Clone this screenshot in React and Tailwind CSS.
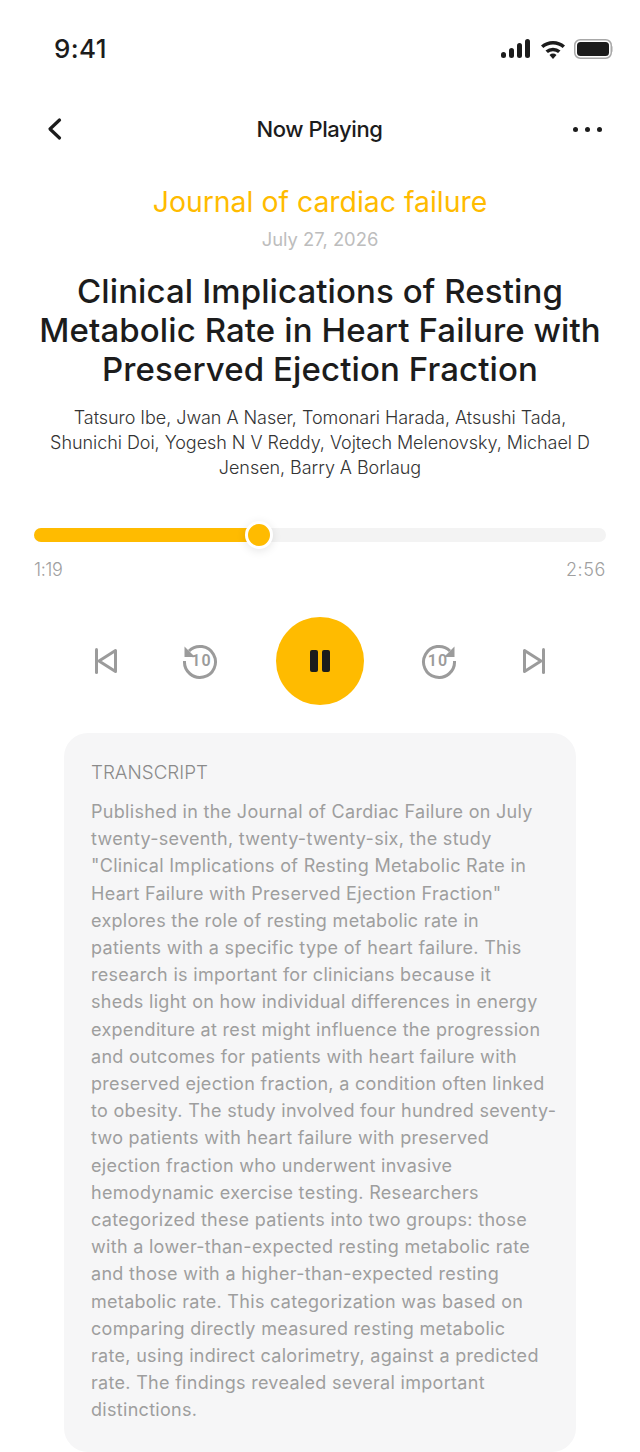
const TRANSCRIPT = [
  "Published in the Journal of Cardiac Failure on July",
  "twenty-seventh, twenty-twenty-six, the study",
  "\"Clinical Implications of Resting Metabolic Rate in",
  "Heart Failure with Preserved Ejection Fraction\"",
  "explores the role of resting metabolic rate in",
  "patients with a specific type of heart failure. This",
  "research is important for clinicians because it",
  "sheds light on how individual differences in energy",
  "expenditure at rest might influence the progression",
  "and outcomes for patients with heart failure with",
  "preserved ejection fraction, a condition often linked",
  "to obesity. The study involved four hundred seventy-",
  "two patients with heart failure with preserved",
  "ejection fraction who underwent invasive",
  "hemodynamic exercise testing. Researchers",
  "categorized these patients into two groups: those",
  "with a lower-than-expected resting metabolic rate",
  "and those with a higher-than-expected resting",
  "metabolic rate. This categorization was based on",
  "comparing directly measured resting metabolic",
  "rate, using indirect calorimetry, against a predicted",
  "rate. The findings revealed several important",
  "distinctions.",
];

function Skip({ flip }) {
  return (
    <svg width="24" height="28" viewBox="0 0 24 28" fill="none" stroke="#9b9b9b" strokeWidth="3" strokeLinejoin="round" strokeLinecap="round" className={flip ? "-scale-x-100" : ""}>
      <path d="M2.500 2.500v23" />
      <path d="M21.500 3.500v21L5 14z" />
    </svg>
  );
}

function Ten({ flip }) {
  return (
    <div className="relative w-[36px] h-[36px]">
      <svg width="36" height="36" viewBox="0 0 36 36" fill="none" stroke="#9b9b9b" strokeWidth="3" className={flip ? "absolute inset-0 -scale-x-100" : "absolute inset-0"}>
        <path d="M7 8A15.500 15.500 0 1 1 2.500 18" />
        <path d="M2.500 3.500v10.500h10.500z" fill="#9b9b9b" stroke="none" />
      </svg>
      <span className={flip ? "absolute inset-0 pr-[2px] flex items-center justify-center text-[16px] font-semibold font-['Roboto',sans-serif] text-[#9b9b9b] tracking-[1px]" : "absolute inset-0 pl-[3px] flex items-center justify-center text-[16px] font-semibold font-['Roboto',sans-serif] text-[#9b9b9b] tracking-[1px]"}>10</span>
    </div>
  );
}

export default function App() {
  return (
    <div className="w-[640px] h-[1452px] bg-white overflow-hidden flex flex-col font-['Inter',sans-serif] text-[#1c1c1c]">
      <div className="h-[98px] shrink-0 pt-[33px] pl-[54px] pr-[27px] flex justify-between items-start">
        <span className="text-[26px] leading-[32px] font-medium tracking-[0.4px]">9:41</span>
        <svg width="112" height="22" viewBox="0 0 112 22" className="mt-[5px]">
          <g fill="#1c1c1c">
            <rect x="0" y="14" width="5" height="6" rx="2.500" />
            <rect x="8" y="10" width="5" height="10" rx="2.500" />
            <rect x="16" y="5" width="5" height="15" rx="2.500" />
            <rect x="24" y="1" width="5" height="19" rx="2.500" />
            <path d="M40 7.500a18 18 0 0 1 24 0l-2.300 2.600a14.500 14.500 0 0 0-19.400 0z" />
            <path d="M44.500 12.500a11.500 11.500 0 0 1 15 0l-2.400 2.600a8 8 0 0 0-10.200 0z" />
            <path d="M48.500 17a5.500 5.500 0 0 1 7 0L52 21z" />
            <rect x="76" y="4" width="32" height="14" rx="3.500" />
          </g>
          <rect x="73.750" y="1.750" width="36.500" height="18.500" rx="5.500" fill="none" stroke="#a8a8a8" strokeWidth="1.500" />
          <path d="M111.500 8v6c1-.3 1-5.700 0-6z" fill="#a8a8a8" />
        </svg>
      </div>

      <div className="h-[62px] shrink-0 flex items-center justify-between pl-[44px] pr-[38px]">
        <svg width="22" height="24" viewBox="0 0 22 24" fill="none" stroke="#1c1c1c" strokeWidth="3.200" strokeLinecap="round" strokeLinejoin="round">
          <path d="M15.500 3L6 12l9.500 9" />
        </svg>
        <span className="text-[22px] font-medium tracking-[-0.4px]">Now Playing</span>
        <div className="flex gap-[7px]">
          <span className="w-[5px] h-[5px] rounded-full bg-[#1c1c1c]" />
          <span className="w-[5px] h-[5px] rounded-full bg-[#1c1c1c]" />
          <span className="w-[5px] h-[5px] rounded-full bg-[#1c1c1c]" />
        </div>
      </div>

      <div className="flex flex-col items-center text-center pt-[22px]">
        <div className="text-[28.400px] leading-[40px] text-[#ffbb00]">Journal of cardiac failure</div>
        <div className="text-[18.400px] leading-[24px] mt-[5px] text-[#bdbdbd]">July 27, 2026</div>
        <h1 className="mt-[21px] text-[33px] leading-[39px] font-medium tracking-[0.1px]">
          Clinical Implications of Resting<br />Metabolic Rate in Heart Failure with<br />Preserved Ejection Fraction
        </h1>
        <p className="mt-[16px] text-[18px] leading-[25px] font-light text-[#333333] tracking-[-0.05px]">
          Tatsuro Ibe, Jwan A Naser, Tomonari Harada, Atsushi Tada,<br />Shunichi Doi, Yogesh N V Reddy, Vojtech Melenovsky, Michael D<br />Jensen, Barry A Borlaug
        </p>
      </div>

      <div className="mx-[34px] mt-[48px] h-[14px] rounded-full bg-[#f3f3f3] relative">
        <div className="h-full w-[226px] rounded-full bg-[#ffbb00]" />
        <div className="absolute left-[211px] top-[-7px] w-[28px] h-[28px] rounded-full bg-[#ffbb00] border-[3px] border-white shadow-[0_2px_10px_rgba(0,0,0,0.1)]" />
      </div>
      <div className="mx-[34px] mt-[16px] flex justify-between text-[18px] leading-[24px] font-light text-[#a0a0a0]">
        <span className="tracking-[-0.4px]">1:19</span>
        <span className="tracking-[0.6px]">2:56</span>
      </div>

      <div className="mt-[34px] flex items-center justify-center h-[90px]">
        <Skip />
        <div className="ml-[64px]"><Ten /></div>
        <div className="ml-[58px] mr-[57px] w-[88px] h-[88px] rounded-full bg-[#ffbb00] flex items-center justify-center gap-[4px]">
          <span className="w-[8px] h-[22px] rounded-[2px] bg-[#1c1c1c]" />
          <span className="w-[8px] h-[22px] rounded-[2px] bg-[#1c1c1c]" />
        </div>
        <div className="mr-[65px]"><Ten flip /></div>
        <Skip flip />
      </div>

      <div className="mx-[64px] mt-[27px] flex-1 rounded-[24px] bg-[#f6f6f7] px-[27px] pt-[27px]">
        <div className="text-[18.800px] leading-[26px] font-light text-[#8a8a8a]">TRANSCRIPT</div>
        <div className="mt-[12px] text-[18px] leading-[27.200px] tracking-[0.3px] text-[#9e9e9e]">
          {TRANSCRIPT.map((l, i) => <div key={i} className="whitespace-nowrap">{l}</div>)}
        </div>
      </div>
    </div>
  );
}
